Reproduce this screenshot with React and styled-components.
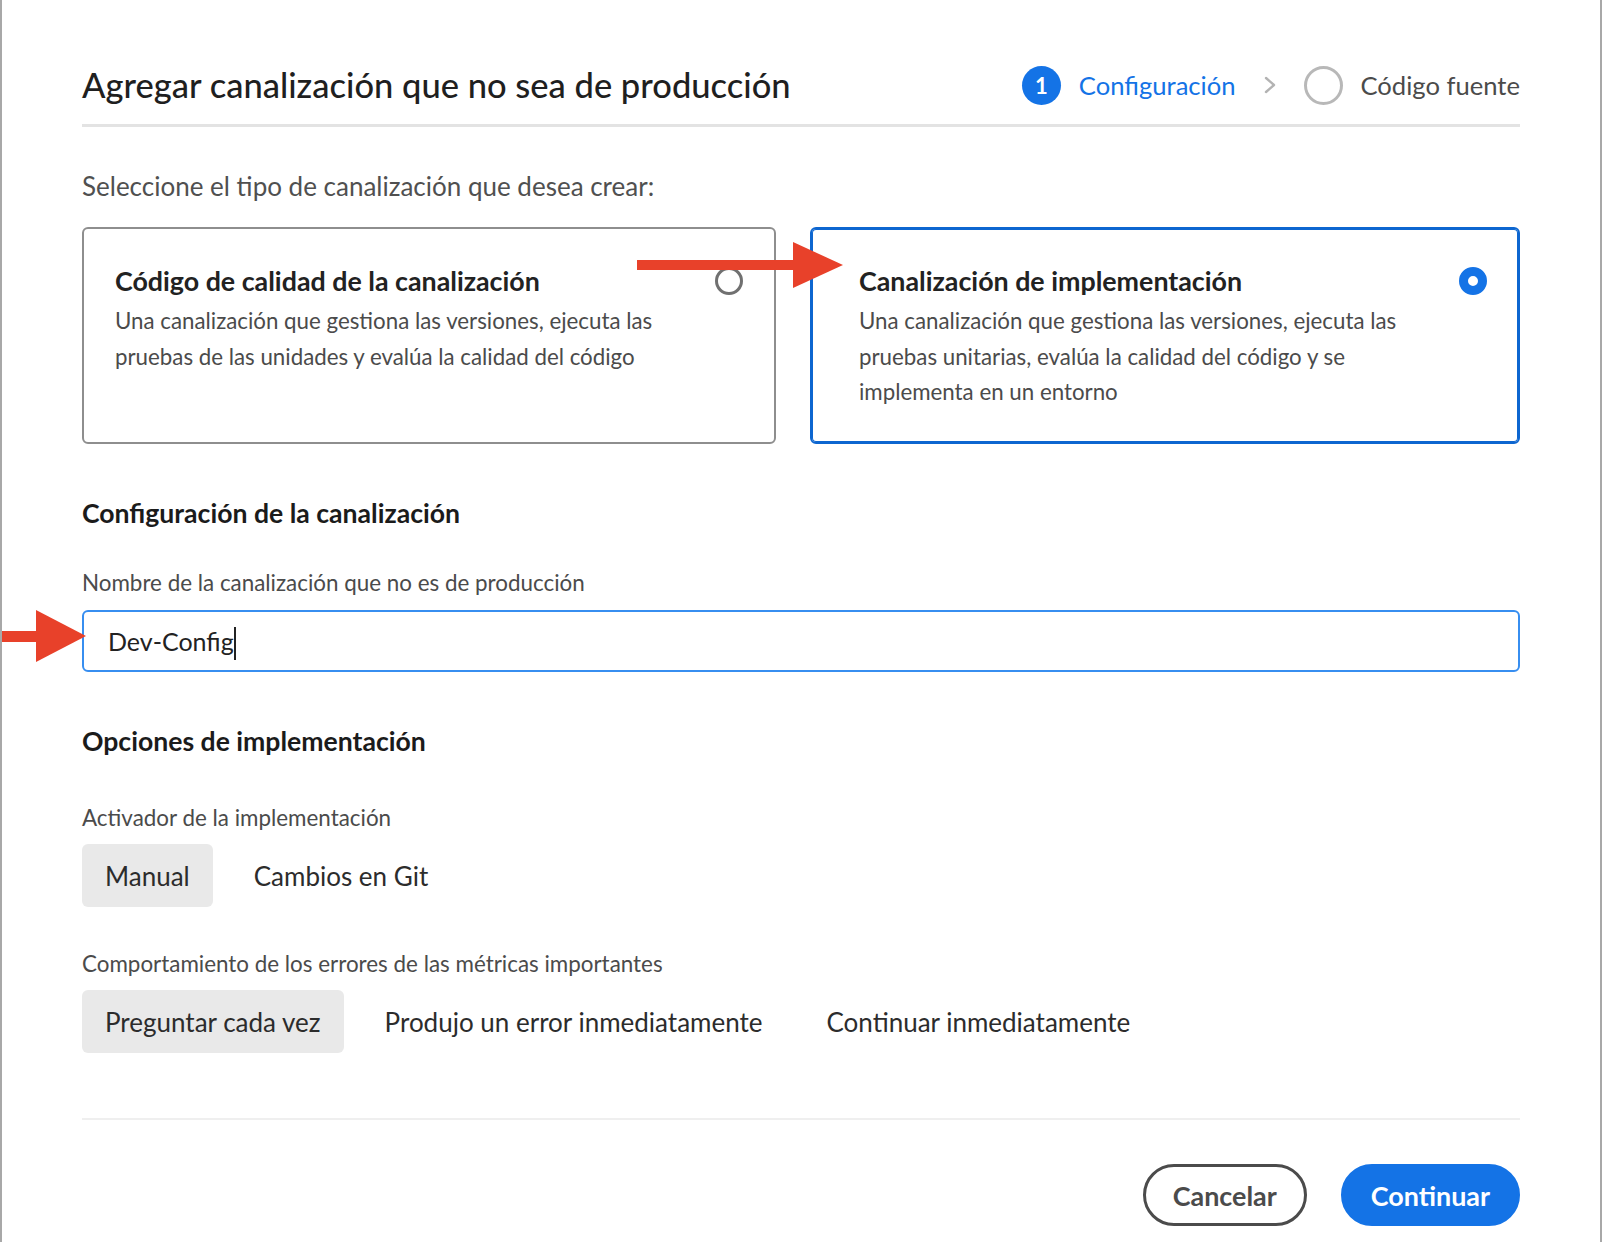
import React from "react";
import styled, { createGlobalStyle } from "styled-components";

const GlobalStyle = createGlobalStyle`
  html, body {
    margin: 0;
    padding: 0;
    background: #ffffff;
  }
  body {
    font-family: "Lato", "Open Sans", sans-serif;
    color: #2c2c2c;
  }
  * {
    box-sizing: border-box;
  }
`;

const triggerOptions = ["Manual", "Cambios en Git"];
const errorOptions = [
  "Preguntar cada vez",
  "Produjo un error inmediatamente",
  "Continuar inmediatamente",
];

const App = () => {
  return (
    <>
      <GlobalStyle />
      <StModal>
        {/* -------------- Header -------------- */}
        <StHeader>
          <StTitle>Agregar canalización que no sea de producción</StTitle>
          <StSteps>
            <StStep>
              <StStepDot $active>1</StStepDot>
              <StStepLabel $active>Configuración</StStepLabel>
            </StStep>
            <StChevron viewBox="0 0 12 18">
              <path d="M2 2 L10 9 L2 16" fill="none" stroke="#b3b3b3" strokeWidth="2.4" strokeLinecap="round" strokeLinejoin="round" />
            </StChevron>
            <StStep>
              <StStepDot />
              <StStepLabel>Código fuente</StStepLabel>
            </StStep>
          </StSteps>
        </StHeader>

        <StIntro>Seleccione el tipo de canalización que desea crear:</StIntro>

        {/* -------------- Pipeline type cards -------------- */}
        <StCards>
          <StCard $padLeft={31}>
            <StCardTop>
              <StCardTitle>Código de calidad de la canalización</StCardTitle>
              <StRadio />
            </StCardTop>
            <StCardText>
              Una canalización que gestiona las versiones, ejecuta las pruebas de las unidades y evalúa la calidad del código
            </StCardText>
          </StCard>
          <StCard $selected $padLeft={47}>
            <StCardTop>
              <StCardTitle>Canalización de implementación</StCardTitle>
              <StRadio $checked />
            </StCardTop>
            <StCardText>
              Una canalización que gestiona las versiones, ejecuta las pruebas unitarias, evalúa la calidad del código y se implementa en un entorno
            </StCardText>
          </StCard>
          <StArrow $top={14} $left={555} width="206" height="48" viewBox="0 0 206 48">
            <rect x="0" y="19" width="158" height="10" fill="#e8412a" />
            <polygon points="156,1 206,24 156,47" fill="#e8412a" />
          </StArrow>
        </StCards>

        {/* -------------- Pipeline config -------------- */}
        <StSectionTitle $gap={54}>Configuración de la canalización</StSectionTitle>
        <StFieldLabel $gap={41}>Nombre de la canalización que no es de producción</StFieldLabel>
        <StField>
          <StFieldValue>Dev-Config</StFieldValue>
          <StCaret />
          <StArrow $top={-2} $left={-84} width="86" height="52" viewBox="0 0 86 52">
            <rect x="0" y="21" width="38" height="11" fill="#e8412a" />
            <polygon points="36,0 86,26 36,52" fill="#e8412a" />
          </StArrow>
        </StField>

        {/* -------------- Deploy options -------------- */}
        <StSectionTitle $gap={54}>Opciones de implementación</StSectionTitle>
        <StFieldLabel $gap={48}>Activador de la implementación</StFieldLabel>
        <StSegments>
          {triggerOptions.map((opt, i) => (
            <StSegment key={opt} $selected={i === 0}>
              {opt}
            </StSegment>
          ))}
        </StSegments>

        <StFieldLabel $gap={43}>Comportamiento de los errores de las métricas importantes</StFieldLabel>
        <StSegments>
          {errorOptions.map((opt, i) => (
            <StSegment key={opt} $selected={i === 0}>
              {opt}
            </StSegment>
          ))}
        </StSegments>

        {/* -------------- Footer -------------- */}
        <StFooter>
          <StButton>Cancelar</StButton>
          <StButton $primary>Continuar</StButton>
        </StFooter>
      </StModal>
    </>
  );
};

export default App;

const StModal = styled.div`
  position: relative;
  width: 1602px;
  height: 1242px;
  padding: 65px 80px 0 80px;
  border-left: 2px solid #a8a8a8;
  border-right: 2px solid #a8a8a8;
  display: flex;
  flex-direction: column;
  overflow: hidden;
`;

const StHeader = styled.div`
  display: flex;
  align-items: center;
  justify-content: space-between;
  padding-bottom: 19px;
  border-bottom: 3px solid #e3e3e3;
`;

const StTitle = styled.h1`
  margin: 0;
  font-size: 34.5px;
  line-height: 40px;
  font-weight: 500;
  color: #1f1f1f;
`;

const StSteps = styled.div`
  display: flex;
  align-items: center;
  gap: 28px;
`;

const StStep = styled.div`
  display: flex;
  align-items: center;
  gap: 18px;
`;

const StStepDot = styled.span`
  width: 39px;
  height: 39px;
  border-radius: 50%;
  display: inline-flex;
  align-items: center;
  justify-content: center;
  font-size: 22px;
  font-weight: 700;
  color: #ffffff;
  background: ${(p) => (p.$active ? "#1473e6" : "transparent")};
  border: ${(p) => (p.$active ? "none" : "3px solid #b8b8b8")};
`;

const StStepLabel = styled.span`
  font-size: 25.6px;
  line-height: 40px;
  color: ${(p) => (p.$active ? "#1473e6" : "#4b4b4b")};
`;

const StChevron = styled.svg`
  width: 12px;
  height: 18px;
`;

const StIntro = styled.p`
  margin: 44px 0 0;
  font-size: 26px;
  line-height: 30px;
  color: #505050;
`;

const StCards = styled.div`
  position: relative;
  margin-top: 26px;
  display: grid;
  grid-template-columns: 694px 1fr;
  gap: 34px;
`;

const StCard = styled.div`
  height: 217px;
  padding: 36px 31px 0 ${(p) => p.$padLeft}px;
  border: 2px solid ${(p) => (p.$selected ? "#0d66d0" : "#8e8e8e")};
  box-shadow: ${(p) => (p.$selected ? "inset 0 0 0 1px #0d66d0" : "none")};
  border-radius: 6px;
  background: #ffffff;
`;

const StCardTop = styled.div`
  display: flex;
  align-items: center;
  justify-content: space-between;
`;

const StCardTitle = styled.h3`
  margin: 0;
  font-size: 26.8px;
  line-height: 32px;
  font-weight: 700;
  color: #222222;
`;

const StRadio = styled.span`
  width: 28px;
  height: 28px;
  border-radius: 50%;
  border: ${(p) => (p.$checked ? "9px solid #1473e6" : "3px solid #707070")};
  background: #ffffff;
`;

const StCardText = styled.p`
  margin: 6px 0 0;
  max-width: 575px;
  font-size: 22.3px;
  line-height: 35.5px;
  color: #4b4b4b;
`;

const StArrow = styled.svg`
  position: absolute;
  top: ${(p) => p.$top}px;
  left: ${(p) => p.$left}px;
  pointer-events: none;
`;

const StSectionTitle = styled.h2`
  margin: ${(p) => p.$gap}px 0 0;
  font-size: 26.6px;
  line-height: 30px;
  font-weight: 700;
  color: #1b1b1b;
`;

const StFieldLabel = styled.div`
  margin-top: ${(p) => p.$gap}px;
  font-size: 22.4px;
  line-height: 28px;
  color: #4b4b4b;
`;

const StField = styled.div`
  position: relative;
  margin-top: 13px;
  height: 62px;
  padding: 0 24px;
  display: flex;
  align-items: center;
  border: 2px solid #378ef0;
  border-radius: 6px;
`;

const StFieldValue = styled.span`
  font-size: 25px;
  color: #222222;
`;

const StCaret = styled.span`
  width: 2px;
  height: 33px;
  margin-left: 0;
  margin-top: 4px;
  background: #222222;
`;

const StSegments = styled.div`
  margin-top: 12px;
  display: flex;
  gap: 18px;
`;

const StSegment = styled.div`
  height: 63px;
  padding: 0 23px;
  display: flex;
  align-items: center;
  font-size: 26px;
  color: #2c2c2c;
  border-radius: 6px;
  background: ${(p) => (p.$selected ? "#e9e9e9" : "transparent")};
`;

const StFooter = styled.div`
  margin-top: 65px;
  padding-top: 44px;
  border-top: 2px solid #efefef;
  display: flex;
  justify-content: flex-end;
  gap: 34px;
`;

const StButton = styled.button`
  height: 62px;
  padding: 0 ${(p) => (p.$primary ? 27 : 27)}px;
  border-radius: 31px;
  font-family: "Lato", "Open Sans", sans-serif;
  font-size: 26.9px;
  font-weight: 700;
  cursor: pointer;
  color: ${(p) => (p.$primary ? "#ffffff" : "#4b4b4b")};
  background: ${(p) => (p.$primary ? "#1473e6" : "#ffffff")};
  border: ${(p) => (p.$primary ? "3px solid #1473e6" : "3px solid #4b4b4b")};
`;
